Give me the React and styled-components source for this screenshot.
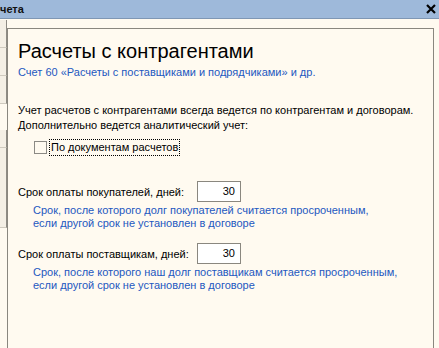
import styled, { createGlobalStyle } from 'styled-components';

const Global = createGlobalStyle`
    body {
        margin: 0;
        background: #fffaf0;
        font-family: "Liberation Sans", Arial, sans-serif;
    }
`

const App = () => {
    return (
        <Window>
            <Global />
            <TitleBar>
                <Caption>чета</Caption>
                <Close>
                    <svg width="10" height="10" viewBox="0 0 10 10">
                        <path d="M1 1 L9 9 M9 1 L1 9" stroke="#000" strokeWidth="2.2" />
                    </svg>
                </Close>
            </TitleBar>
            <Body>
                <Sidebar>
                    <SideRow $h={28} />
                    <SideRow $h={28} />
                    <SideRow $h={28} />
                    <SideGap $h={26} />
                    <SideRow $h={18} />
                    <SideRow $h={80} />
                </Sidebar>
                <Panel>
                    <Heading>Расчеты с контрагентами</Heading>
                    <Hint $indent={0} $gap={2}>Счет 60 «Расчеты с поставщиками и подрядчиками» и др.</Hint>
                    <Text>
                        Учет расчетов с контрагентами всегда ведется по контрагентам и договорам.<br />
                        Дополнительно ведется аналитический учет:
                    </Text>
                    <CheckRow>
                        <Box />
                        <CheckLabel>По документам расчетов</CheckLabel>
                    </CheckRow>
                    <Field>
                        <FieldRow>
                            <Label>Срок оплаты покупателей, дней:</Label>
                            <NumInput>30</NumInput>
                        </FieldRow>
                        <Hint $indent={15} $gap={2}>
                            Срок, после которого долг покупателей считается просроченным,<br />
                            если другой срок не установлен в договоре
                        </Hint>
                    </Field>
                    <Field>
                        <FieldRow>
                            <Label>Срок оплаты поставщикам, дней:</Label>
                            <NumInput>30</NumInput>
                        </FieldRow>
                        <Hint $indent={15} $gap={2}>
                            Срок, после которого наш долг поставщикам считается просроченным,<br />
                            если другой срок не установлен в договоре
                        </Hint>
                    </Field>
                </Panel>
            </Body>
        </Window>
    )
}

const Window = styled.div`
    width: 439px;
    height: 348px;
    overflow: hidden;
    display: flex;
    flex-direction: column;
    background: #fffaf0;
    white-space: nowrap;
`
const TitleBar = styled.div`
    height: 19px;
    flex: none;
    box-sizing: border-box;
    background: #9eb9da;
    border-bottom: 1px solid #7f97b4;
    display: flex;
    align-items: center;
    justify-content: space-between;
    padding: 0 2px 0 0;
`
const Caption = styled.span`
    font-size: 11px;
    font-weight: bold;
    color: #111;
`
const Close = styled.span`
    display: flex;
    width: 12px;
    justify-content: center;
`
const Body = styled.div`
    flex: 1;
    display: flex;
    min-height: 0;
`
const Sidebar = styled.div`
    width: 7px;
    flex: none;
    padding-top: 1px;
    display: flex;
    flex-direction: column;
`
const SideRow = styled.div`
    height: ${p => p.$h}px;
    background: #f4efe5;
    border-bottom: 1px solid #cfcabf;
    border-right: 1px solid #8e8b84;
    box-sizing: border-box;
`
const SideGap = styled.div`
    height: ${p => p.$h}px;
`
const Panel = styled.div`
    flex: 1;
    margin: 9px 5px 0 0;
    border: 1px solid #8a877f;
    border-bottom: none;
    padding: 9px 0 0 10px;
    font-size: 11px;
    color: #000;
`
const Heading = styled.h1`
    margin: 0;
    font-weight: normal;
    font-size: 20px;
    line-height: 26px;
    color: #000;
`
const Hint = styled.div`
    color: #2358c0;
    font-size: 11px;
    line-height: 13px;
    margin-top: ${p => p.$gap}px;
    padding-left: ${p => p.$indent}px;
`
const Text = styled.p`
    margin: 24px 0 0;
    font-size: 11px;
    line-height: 15px;
`
const CheckRow = styled.div`
    display: flex;
    align-items: center;
    margin: 6px 0 0 16px;
    gap: 2px;
`
const Box = styled.span`
    width: 13px;
    height: 13px;
    box-sizing: border-box;
    border: 1px solid #8c8a85;
    background: #fffaf0;
`
const CheckLabel = styled.span`
    border: 1px dotted #000;
    padding: 1px 1px;
    line-height: 13px;
`
const Field = styled.div`
    margin-top: 25px;
    & + & {
        margin-top: 13px;
    }
`
const FieldRow = styled.div`
    display: flex;
    align-items: center;
`
const Label = styled.span`
    width: 179px;
`
const NumInput = styled.div`
    width: 44px;
    height: 21px;
    box-sizing: border-box;
    border: 1px solid #8a877f;
    background: #fff;
    text-align: right;
    padding: 0 5px;
    line-height: 19px;
    font-size: 11px;
`

export default App
